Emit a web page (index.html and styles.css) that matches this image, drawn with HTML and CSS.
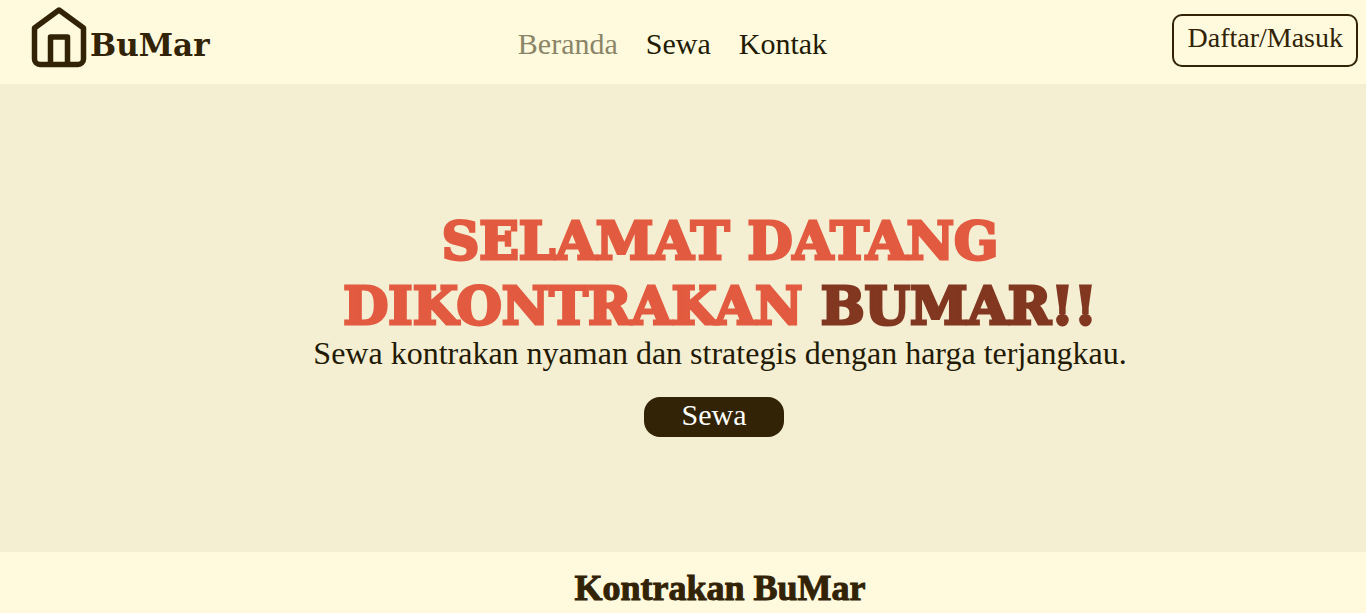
FILE: index.html
```html
<!DOCTYPE html>
<html lang="id">
<head>
<meta charset="utf-8">
<meta name="viewport" content="width=device-width, initial-scale=1">
<title>BuMar</title>
<link rel="stylesheet" href="styles.css">
</head>
<body>
<header class="navbar">
  <a class="brand" href="#">
    <svg class="brand-icon" viewBox="0 0 56 62" fill="none" stroke="currentColor" stroke-width="5.500" stroke-linejoin="round" aria-hidden="true">
      <path d="M3.500 22 28 4 52.500 22V53a5.500 5.500 0 0 1-5.500 5.500H9A5.500 5.500 0 0 1 3.500 53Z"/>
      <path d="M19.500 58.500V31H36.500V58.500"/>
    </svg>
    <span class="brand-name">BuMar</span>
  </a>
  <nav class="menu">
    <a class="menu-link active" href="#">Beranda</a>
    <a class="menu-link" href="#">Sewa</a>
    <a class="menu-link" href="#">Kontak</a>
  </nav>
  <div class="account"><button class="login" type="button">Daftar/Masuk</button></div>
</header>
<main>
  <section class="hero">
    <h1 class="hero-title">SELAMAT DATANG<br>DIKONTRAKAN <span class="hero-name">BUMAR!!</span></h1>
    <p class="hero-text">Sewa kontrakan nyaman dan strategis dengan harga terjangkau.</p>
    <a class="hero-button" href="#">Sewa</a>
  </section>
  <section class="listing">
    <h2 class="listing-title">Kontrakan BuMar</h2>
  </section>
</main>
</body>
</html>
```

FILE: styles.css
```css
* {
  box-sizing: border-box;
}

body {
  margin: 0;
  background: #fffadd;
  color: #322306;
  font-family: "Liberation Serif", serif;
}

.navbar {
  display: grid;
  grid-template-columns: 1fr auto 1fr;
  align-items: start;
  min-height: 84px;
  padding: 6px 8px 0 31px;
}

.brand {
  display: flex;
  align-items: center;
  gap: 3px;
  color: #322306;
  text-decoration: none;
}

.brand-icon {
  width: 56px;
  height: 62px;
}

.brand-name {
  padding-top: 16px;
  font-family: "DejaVu Serif", serif;
  font-size: 31px;
  font-weight: 700;
  line-height: 40px;
}

.menu {
  display: flex;
  gap: 28px;
  padding: 20px 44px 0 0;
}

.menu-link {
  color: #221a04;
  font-size: 30px;
  line-height: 36px;
  text-decoration: none;
}

.menu-link.active {
  color: #8b8568;
}

.account {
  display: flex;
  justify-content: flex-end;
  padding-top: 8px;
}

.login {
  padding: 5px 13px 10px;
  border: 2px solid #322306;
  border-radius: 10px;
  background: transparent;
  color: #322306;
  font-family: inherit;
  font-size: 28px;
  line-height: 34px;
}

.hero {
  display: flex;
  flex-direction: column;
  align-items: center;
  padding: 124px 0 115px 74px;
  background: #f4eed3;
  text-align: center;
}

.hero-title {
  margin: 0;
  color: #e25b40;
  font-family: "DejaVu Serif", serif;
  font-size: 52px;
  font-weight: 900;
  line-height: 65px;
  -webkit-text-stroke: 3px currentColor;
}

.hero-name {
  color: #823720;
}

.hero-text {
  margin: 0;
  color: #221a04;
  font-size: 32px;
  line-height: 30px;
}

.hero-button {
  width: 140px;
  margin: 29px 12px 0 0;
  padding-bottom: 4px;
  border-radius: 16px;
  background: #322306;
  color: #ffffff;
  font-size: 30px;
  line-height: 36px;
  text-decoration: none;
}

.listing {
  padding: 16px 0 24px 74px;
  text-align: center;
}

.listing-title {
  margin: 0;
  font-size: 36px;
  font-weight: 700;
  line-height: 40px;
  -webkit-text-stroke: 1px currentColor;
}
```
